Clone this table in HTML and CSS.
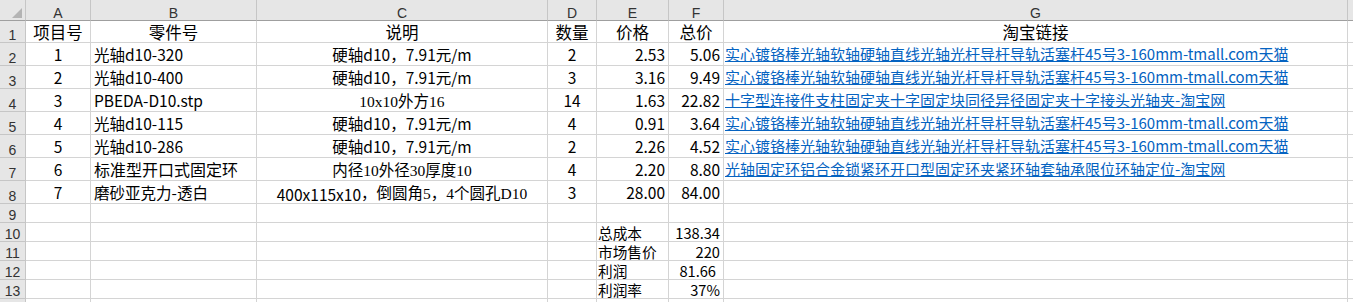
FILE: index.html
```html
<!DOCTYPE html>
<html lang="zh-CN">
<head>
<meta charset="utf-8">
<title>零件清单</title>
<link rel="stylesheet" href="styles.css">
</head>
<body>
<div class="sheet">
  <div class="row">
    <div class="corner"><span class="tri"></span></div>
    <div class="ch">A</div><div class="ch">B</div><div class="ch">C</div><div class="ch">D</div><div class="ch">E</div><div class="ch">F</div><div class="ch">G</div><div class="ch"></div>
  </div>
  <div class="row r1">
    <div class="rh">1</div>
    <div class="c ctr">项目号</div>
    <div class="c ctr">零件号</div>
    <div class="c ctr">说明</div>
    <div class="c ctr">数量</div>
    <div class="c ctr">价格</div>
    <div class="c ctr">总价</div>
    <div class="c ctr">淘宝链接</div>
    <div class="c"></div>
  </div>
  <div class="row">
    <div class="rh">2</div>
    <div class="c ctr">1</div>
    <div class="c">光轴d10-320</div>
    <div class="c ctr">硬轴d10，7.91元/m</div>
    <div class="c ctr">2</div>
    <div class="c num">2.53</div>
    <div class="c num">5.06</div>
    <div class="c lnk"><a href="#">实心镀铬棒光轴软轴硬轴直线光轴光杆导杆导轨活塞杆45号3-160mm-tmall.com天猫</a></div>
    <div class="c"></div>
  </div>
  <div class="row">
    <div class="rh">3</div>
    <div class="c ctr">2</div>
    <div class="c">光轴d10-400</div>
    <div class="c ctr">硬轴d10，7.91元/m</div>
    <div class="c ctr">3</div>
    <div class="c num">3.16</div>
    <div class="c num">9.49</div>
    <div class="c lnk"><a href="#">实心镀铬棒光轴软轴硬轴直线光轴光杆导杆导轨活塞杆45号3-160mm-tmall.com天猫</a></div>
    <div class="c"></div>
  </div>
  <div class="row">
    <div class="rh">4</div>
    <div class="c ctr">3</div>
    <div class="c">PBEDA-D10.stp</div>
    <div class="c ctr songcell"><span class="song">10x10外方16</span></div>
    <div class="c ctr">14</div>
    <div class="c num">1.63</div>
    <div class="c num">22.82</div>
    <div class="c lnk"><a href="#">十字型连接件支柱固定夹十字固定块同径异径固定夹十字接头光轴夹-淘宝网</a></div>
    <div class="c"></div>
  </div>
  <div class="row">
    <div class="rh">5</div>
    <div class="c ctr">4</div>
    <div class="c">光轴d10-115</div>
    <div class="c ctr">硬轴d10，7.91元/m</div>
    <div class="c ctr">4</div>
    <div class="c num">0.91</div>
    <div class="c num">3.64</div>
    <div class="c lnk"><a href="#">实心镀铬棒光轴软轴硬轴直线光轴光杆导杆导轨活塞杆45号3-160mm-tmall.com天猫</a></div>
    <div class="c"></div>
  </div>
  <div class="row">
    <div class="rh">6</div>
    <div class="c ctr">5</div>
    <div class="c">光轴d10-286</div>
    <div class="c ctr">硬轴d10，7.91元/m</div>
    <div class="c ctr">2</div>
    <div class="c num">2.26</div>
    <div class="c num">4.52</div>
    <div class="c lnk"><a href="#">实心镀铬棒光轴软轴硬轴直线光轴光杆导杆导轨活塞杆45号3-160mm-tmall.com天猫</a></div>
    <div class="c"></div>
  </div>
  <div class="row">
    <div class="rh">7</div>
    <div class="c ctr">6</div>
    <div class="c big">标准型开口式固定环</div>
    <div class="c ctr songcell"><span class="song">内径10外径30厚度10</span></div>
    <div class="c ctr">4</div>
    <div class="c num">2.20</div>
    <div class="c num">8.80</div>
    <div class="c lnk"><a href="#">光轴固定环铝合金锁紧环开口型固定环夹紧环轴套轴承限位环轴定位-淘宝网</a></div>
    <div class="c"></div>
  </div>
  <div class="row">
    <div class="rh">8</div>
    <div class="c ctr">7</div>
    <div class="c">磨砂亚克力-透白</div>
    <div class="c ctr songcell">400x115x10<span class="song">，倒圆角5，4个圆孔D10</span></div>
    <div class="c ctr">3</div>
    <div class="c num">28.00</div>
    <div class="c num">84.00</div>
    <div class="c"></div>
    <div class="c"></div>
  </div>
  <div class="row sm">
    <div class="rh">9</div>
    <div class="c"></div><div class="c"></div><div class="c"></div><div class="c"></div><div class="c"></div><div class="c"></div><div class="c"></div><div class="c"></div>
  </div>
  <div class="row sm">
    <div class="rh">10</div>
    <div class="c"></div><div class="c"></div><div class="c"></div><div class="c"></div>
    <div class="c lbl">总成本</div>
    <div class="c num">138.34</div>
    <div class="c"></div><div class="c"></div>
  </div>
  <div class="row sm">
    <div class="rh">11</div>
    <div class="c"></div><div class="c"></div><div class="c"></div><div class="c"></div>
    <div class="c lbl">市场售价</div>
    <div class="c num">220</div>
    <div class="c"></div><div class="c"></div>
  </div>
  <div class="row sm">
    <div class="rh">12</div>
    <div class="c"></div><div class="c"></div><div class="c"></div><div class="c"></div>
    <div class="c lbl">利润</div>
    <div class="c num inset">81.66</div>
    <div class="c"></div><div class="c"></div>
  </div>
  <div class="row sm">
    <div class="rh">13</div>
    <div class="c"></div><div class="c"></div><div class="c"></div><div class="c"></div>
    <div class="c lbl">利润率</div>
    <div class="c num">37%</div>
    <div class="c"></div><div class="c"></div>
  </div>
  <div class="row sm">
    <div class="rh"></div>
    <div class="c"></div><div class="c"></div><div class="c"></div><div class="c"></div><div class="c"></div><div class="c"></div><div class="c"></div><div class="c"></div>
  </div>
</div>
</body>
</html>
```

FILE: styles.css
```css
html, body {
  margin: 0;
  padding: 0;
  background: #ffffff;
}

body {
  font-family: "Noto Sans CJK SC", "Liberation Sans", sans-serif;
  color: #000000;
}

.sheet {
  display: grid;
  grid-template-columns: 26px 65px 166px 291px 49px 72px 55px 624px 1fr;
  grid-template-rows: 21px 22px repeat(7, 23px) repeat(6, 19px);
  width: 1353px;
  height: 302px;
  overflow: hidden;
}

.row {
  display: contents;
}

.corner,
.ch,
.rh,
.c {
  box-sizing: border-box;
  display: flex;
  align-items: flex-end;
  min-width: 0;
  white-space: nowrap;
  overflow: hidden;
  border-right: 1px solid #d4d4d4;
  border-bottom: 1px solid #d4d4d4;
}

/* header strip */
.corner {
  background: #e6e6e6;
  justify-content: flex-end;
  padding: 0 3px 2px 0;
  border-right-color: #c6c6c6;
  border-bottom-color: #9f9f9f;
}

.tri {
  width: 0;
  height: 0;
  border-left: 10px solid transparent;
  border-bottom: 10px solid #b4b4b4;
}

.ch {
  background: #e6e6e6;
  justify-content: center;
  font-family: "Liberation Sans", sans-serif;
  font-size: 14px;
  line-height: 14px;
  color: #333333;
  border-right-color: #c6c6c6;
  border-bottom-color: #9f9f9f;
}

.rh {
  background: #e6e6e6;
  justify-content: center;
  font-family: "Liberation Sans", sans-serif;
  font-size: 14px;
  line-height: 14px;
  color: #333333;
  border-right-color: #c6c6c6;
  border-bottom-color: #c6c6c6;
}

/* data cells */
.c {
  font-size: 15.5px;
  line-height: 16px;
  padding: 0 3px 3px 3px;
}

.r1 .c {
  font-size: 16.5px;
  padding-bottom: 2px;
}

.sm .c {
  font-size: 14.67px;
  line-height: 15px;
  padding-bottom: 1px;
}

.ctr {
  justify-content: center;
}

.num {
  justify-content: flex-end;
}

.inset {
  padding-right: 7px;
}

.lbl {
  padding-left: 1px;
}

.big {
  font-size: 16px;
}

.songcell {
  padding-bottom: 1.5px;
}

.song {
  font-family: "Liberation Serif", "Noto Sans CJK SC", serif;
}

.lnk {
  padding-left: 1px;
  font-size: 15px;
}

.lnk a {
  color: #0563c1;
  text-decoration: underline;
  text-decoration-color: #0563c1;
  text-underline-offset: 1px;
}
```
